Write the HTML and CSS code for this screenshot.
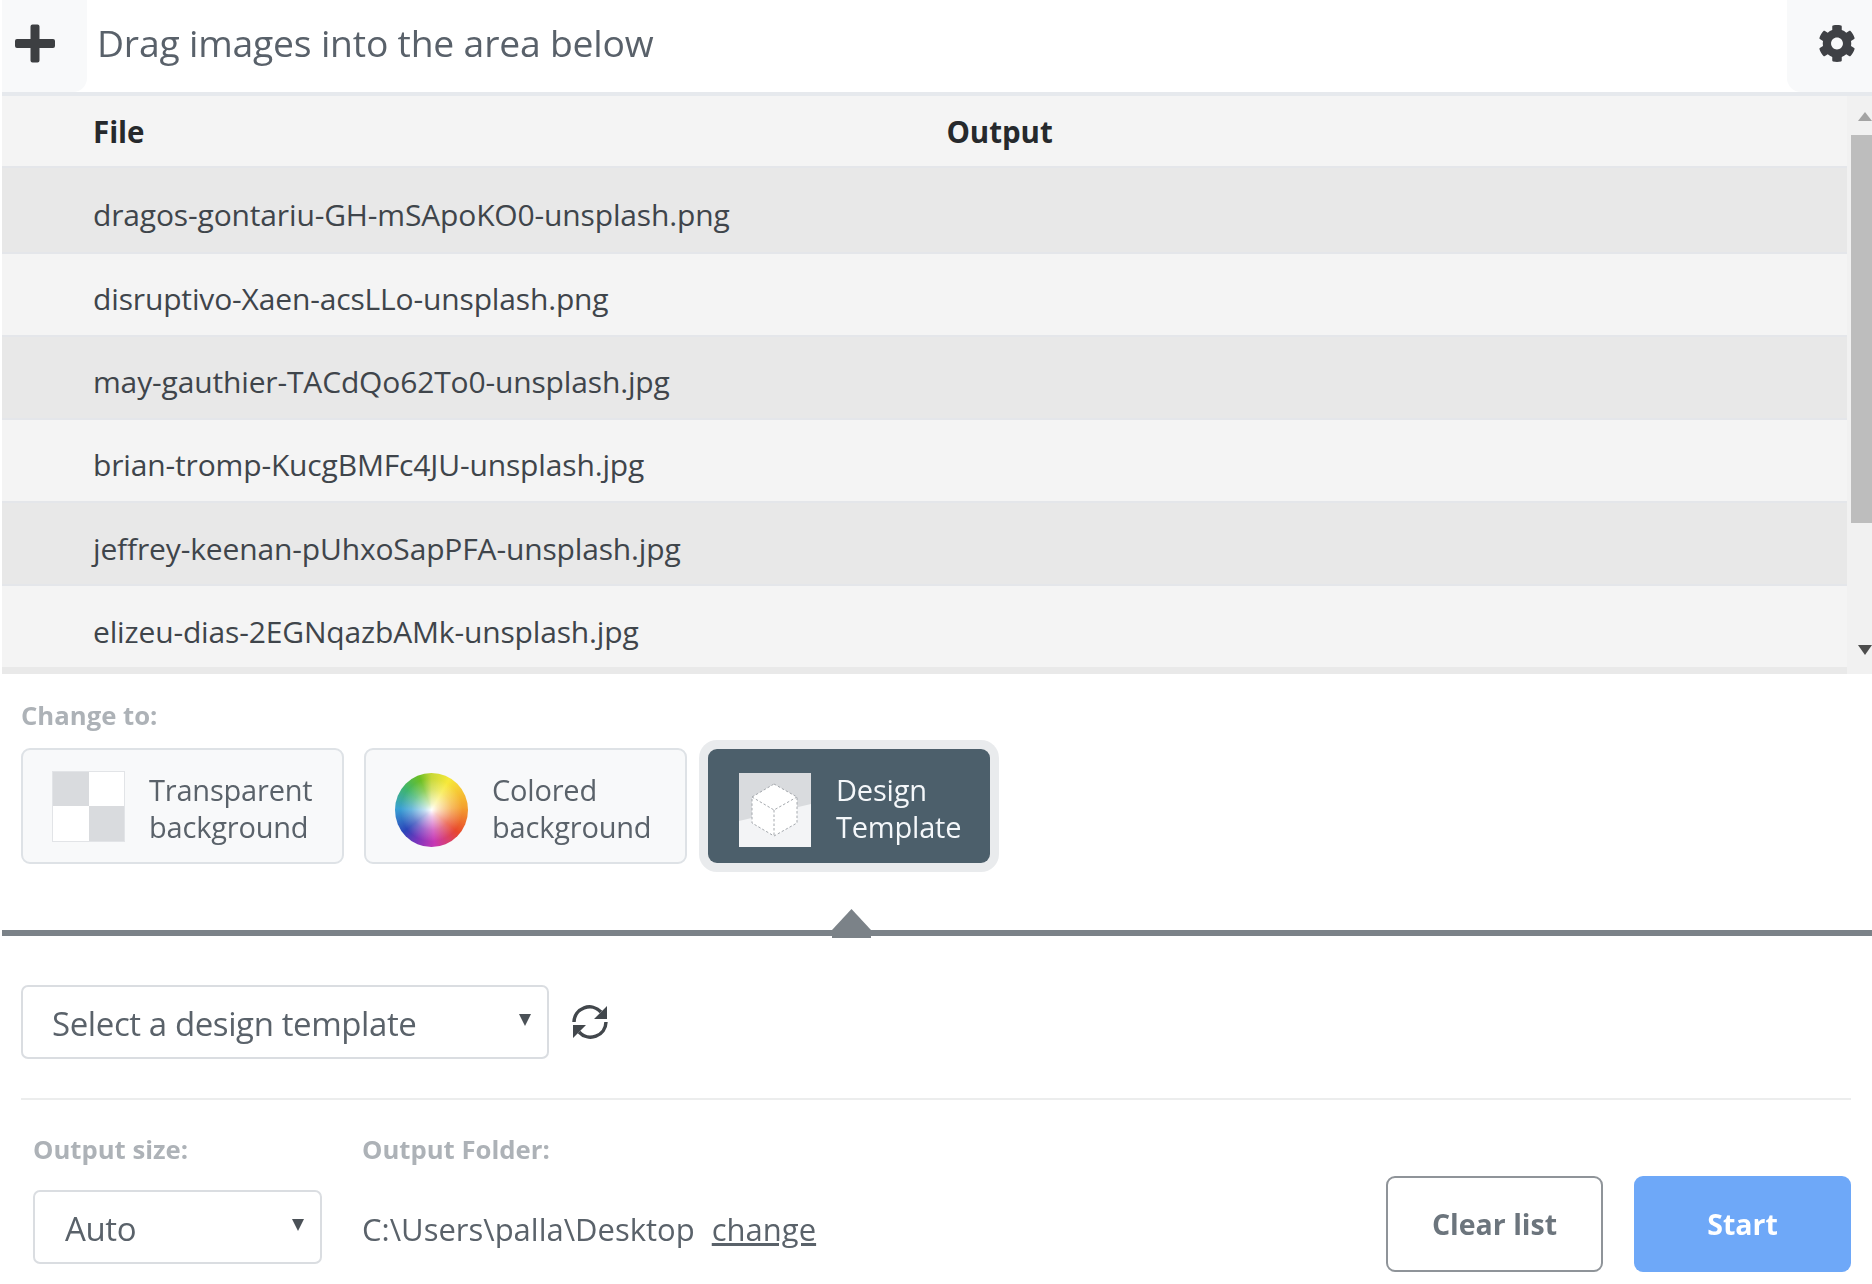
FILE: index.html
```html
<!DOCTYPE html>
<html lang="en">
<head>
<meta charset="utf-8">
<title>Change background</title>
<link rel="stylesheet" href="styles.css">
</head>
<body>
<div class="app">
  <header class="topbar">
    <button class="tool tool-add" aria-label="Add">
      <svg class="plus" viewBox="0 0 40 39"><path d="M15.5 2.5a2 2 0 0 1 2-2h5a2 2 0 0 1 2 2V15H38a2 2 0 0 1 2 2v5a2 2 0 0 1-2 2H24.500V36.500a2 2 0 0 1-2 2h-5a2 2 0 0 1-2-2V24H2a2 2 0 0 1-2-2v-5a2 2 0 0 1 2-2h13.500z"/></svg>
    </button>
    <div class="hint">Drag images into the area below</div>
    <button class="tool tool-gear" aria-label="Settings">
      <svg class="gear" viewBox="0 0 512 512"><path d="M487.400 315.700l-42.600-24.600c4.300-23.200 4.300-47 0-70.200l42.600-24.600c4.900-2.800 7.100-8.600 5.500-14-11.100-35.600-30-67.800-54.700-94.600-3.800-4.100-10-5.100-14.800-2.300L380.800 110c-17.900-15.400-38.500-27.300-60.800-35.100V25.800c0-5.600-3.900-10.500-9.400-11.700-36.700-8.200-74.300-7.800-109.200 0-5.500 1.200-9.400 6.100-9.400 11.700V75c-22.200 7.900-42.800 19.800-60.800 35.100L88.700 85.500c-4.900-2.800-11-1.900-14.800 2.300-24.700 26.700-43.600 58.900-54.700 94.600-1.700 5.400.6 11.200 5.500 14L67.300 221c-4.300 23.200-4.300 47 0 70.200l-42.600 24.600c-4.900 2.800-7.100 8.600-5.500 14 11.100 35.600 30 67.800 54.700 94.600 3.800 4.100 10 5.100 14.800 2.300l42.600-24.600c17.900 15.400 38.500 27.300 60.800 35.100v49.200c0 5.600 3.900 10.500 9.400 11.700 36.700 8.200 74.300 7.800 109.200 0 5.500-1.200 9.400-6.100 9.400-11.700v-49.200c22.200-7.900 42.800-19.800 60.800-35.100l42.600 24.600c4.900 2.800 11 1.900 14.800-2.300 24.700-26.700 43.600-58.900 54.700-94.600 1.500-5.500-.7-11.300-5.600-14.100zM256 336c-44.100 0-80-35.900-80-80s35.900-80 80-80 80 35.900 80 80-35.900 80-80 80z"/></svg>
    </button>
  </header>

  <section class="filelist">
    <div class="rows">
      <div class="row row-head"><span class="col-file">File</span><span class="col-output">Output</span></div>
      <div class="row row-dark row-first"><span class="col-file">dragos-gontariu-GH-mSApoKO0-unsplash.png</span></div>
      <div class="row"><span class="col-file">disruptivo-Xaen-acsLLo-unsplash.png</span></div>
      <div class="row row-dark"><span class="col-file">may-gauthier-TACdQo62To0-unsplash.jpg</span></div>
      <div class="row"><span class="col-file">brian-tromp-KucgBMFc4JU-unsplash.jpg</span></div>
      <div class="row row-dark"><span class="col-file">jeffrey-keenan-pUhxoSapPFA-unsplash.jpg</span></div>
      <div class="row"><span class="col-file">elizeu-dias-2EGNqazbAMk-unsplash.jpg</span></div>
    </div>
    <div class="scrollbar">
      <svg class="arrow arrow-up" viewBox="0 0 14 9"><path d="M7 0l7 9H0z"/></svg>
      <div class="thumb"></div>
      <svg class="arrow arrow-down" viewBox="0 0 14 10"><path d="M0 0h14l-7 10z"/></svg>
    </div>
  </section>

  <section class="change">
    <div class="label">Change to:</div>
    <div class="options">
      <div class="option">
        <div class="checker"><i class="cell cell-grey"></i><i class="cell"></i><i class="cell"></i><i class="cell cell-grey"></i></div>
        <div class="option-text">Transparent<br>background</div>
      </div>
      <div class="option">
        <div class="wheel"></div>
        <div class="option-text">Colored<br>background</div>
      </div>
      <div class="option option-active">
        <svg class="cube" viewBox="0 0 72 74">
          <rect width="72" height="74" fill="#f3f4f6"/>
          <path d="M0 0h72v31L0 48z" fill="#d9dbde"/>
          <path d="M35 11l23 13v26L35 63 13 50V24z" fill="#fff"/>
          <path d="M35 11l23 13v26L35 63 13 50V24zM13 24l22 13 23-13M35 37v26" fill="none" stroke="#a4a8ad" stroke-width="1" stroke-dasharray="2.500 2"/>
        </svg>
        <div class="option-text">Design<br>Template</div>
      </div>
    </div>
  </section>

  <div class="divider">
    <svg class="pointer" viewBox="0 0 39 29"><path d="M19.500 0L39 21v8H0v-8z"/></svg>
  </div>

  <section class="template">
    <div class="select select-template"><span>Select a design template</span><svg class="caret" viewBox="0 0 12 12"><path d="M0 0h12L6 12z"/></svg></div>
    <svg class="refresh" viewBox="0 0 38 38">
      <path class="refresh-arc" d="M3 19A15.500 15.500 0 0 1 30 9M35 19A15.500 15.500 0 0 1 8 29"/>
      <path class="refresh-head" d="M36 3v13H23zM2 35V22h13z"/>
    </svg>
  </section>

  <footer class="bottom">
    <div class="field field-size">
      <div class="label">Output size:</div>
      <div class="select select-size"><span>Auto</span><svg class="caret" viewBox="0 0 12 12"><path d="M0 0h12L6 12z"/></svg></div>
    </div>
    <div class="field field-folder">
      <div class="label">Output Folder:</div>
      <div class="path">C:\Users\palla\Desktop <a class="link" href="#">change</a></div>
    </div>
    <div class="actions">
      <button class="btn btn-clear">Clear list</button>
      <button class="btn btn-start">Start</button>
    </div>
  </footer>
</div>
</body>
</html>
```

FILE: styles.css
```css
* { box-sizing: border-box; }
html, body { margin: 0; padding: 0; background: #fff; overflow: hidden; }
body { font-family: "Open Sans", "Noto Sans", "Liberation Sans", sans-serif; color: #495057; }
.app { width: 1872px; height: 1284px; padding-left: 2px; filter: blur(0.5px); }

.topbar { display: flex; align-items: center; height: 96px; border-bottom: 4px solid #e6e9ed; }
.tool { height: 92px; border: 0; background: #f8f9fa; padding: 0; display: flex; align-items: center; }
.tool-add { width: 85px; border-bottom-right-radius: 14px; padding-left: 13px; }
.tool-gear { width: 85px; margin-left: auto; border-bottom-left-radius: 14px; padding-left: 31px; }
.plus { width: 40px; height: 39px; fill: #3d3f42; margin-bottom: 5px; }
.gear { width: 38px; height: 39px; fill: #3f4145; margin-bottom: 5px; }
.hint { margin: 0 0 7px 10px; font-size: 37.3px; letter-spacing: -0.2px; color: #59616a; }

.filelist { display: flex; height: 578px; background: #f1f1f1; }
.rows { width: 1845px; height: 578px; background: #e9e9e9; }
.row { display: flex; height: 83.2px; align-items: center; padding: 9px 0 0 91px; background: #f4f4f4; border-top: 2px solid #e4e6ea; font-size: 30px; letter-spacing: -0.15px; color: #3f454b; }
.row-first { height: 85.5px; }
.row-head { height: 70px; padding-top: 0; border-top: 0; font-weight: 700; color: #26292c; font-size: 29.5px; letter-spacing: -0.05px; }
.row-dark { background: #e8e8e8; }
.col-output { margin-left: 802px; }
.scrollbar { flex: 1; display: flex; flex-direction: column; align-items: flex-end; padding-top: 16px; height: 577px; }
.arrow { display: block; width: 14px; }
.arrow-up { height: 9px; fill: #a3a3a3; }
.arrow-down { height: 10px; fill: #4d4d4d; margin-top: auto; margin-bottom: 18px; }
.thumb { width: 21px; height: 388px; margin-top: 14px; background: #bdbdbd; }

.change { padding: 25px 0 0 19px; }
.label { font-size: 25.7px; font-weight: 700; color: #adb2b7; line-height: 34px; }
.options { display: flex; gap: 20px; align-items: center; margin-top: 15px; }
.option { display: flex; align-items: center; width: 323px; height: 116px; padding-left: 29px; gap: 24px; background: #f8f9fa; border: 2px solid #dee2e6; border-radius: 9px; }
.option-text { padding-top: 3px; font-size: 29px; line-height: 37px; letter-spacing: -0.2px; color: #5a626a; }
.checker { display: grid; grid-template-columns: 1fr 1fr; width: 73px; height: 71px; padding: 1px; background: #e2e4e7; }
.cell { background: #fff; }
.cell-grey { background: #d9dbde; }
.wheel { width: 73px; height: 74px; margin-top: 7px; border-radius: 50%; background:
  radial-gradient(closest-side, #fff 0, rgba(255,255,255,.7) 18%, rgba(255,255,255,.25) 55%, rgba(255,255,255,0) 85%),
  conic-gradient(#c8d838 0deg, #f7e93a 30deg, #f4a12e 85deg, #e8482c 130deg, #c738b4 175deg, #7a35bc 205deg, #2b45b8 232deg, #3aa0d4 272deg, #3fb56a 310deg, #6cbf24 340deg, #c8d838 360deg); }
.option-active { width: 282px; height: 114px; margin-left: 1px; background: #4c5f6b; border: 0; box-shadow: 0 0 0 9px #e9ebed; gap: 25px; padding-left: 31px; }
.option-active .option-text { color: #f4f7fa; }
.cube { width: 72px; height: 74px; flex: none; margin-top: 7px; }

.divider { position: relative; height: 6px; margin: 66px 0 0 0; background: #7b8288; }
.pointer { position: absolute; left: 830px; top: -21px; width: 39px; height: 29px; fill: #7b8288; }

.template { display: flex; align-items: center; gap: 22px; height: 164px; margin: 0 21px 0 19px; padding-top: 9px; border-bottom: 2px solid #eceded; }
.select { display: flex; align-items: center; justify-content: space-between; height: 74px; background: #fff; border: 2px solid #dadde1; border-radius: 7px; font-size: 33px; letter-spacing: -0.4px; color: #5a626a; }
.select-template { width: 528px; padding: 3px 16px 0 29px; }
.select-size { width: 289px; padding: 3px 16px 0 30px; }
.caret { width: 12px; height: 12px; fill: #4b5157; margin-top: -7px; }
.refresh { width: 38px; height: 38px; }
.refresh-arc { fill: none; stroke: #42474c; stroke-width: 3.5; }
.refresh-head { fill: #42474c; }

.bottom { display: flex; margin: 0 21px 0 31px; padding-top: 33px; }
.field-size { width: 329px; }
.field .label { margin-bottom: 23px; }
.field-folder { flex: 1; }
.path { font-size: 31px; color: #5a626a; line-height: 78px; }
.link { color: #5a626a; margin-left: 9px; }
.actions { display: flex; gap: 31px; padding-top: 43px; }
.btn { width: 217px; height: 96px; border-radius: 9px; font-family: inherit; font-size: 28.5px; font-weight: 700; }
.btn-clear { background: #fff; border: 2px solid #8f9499; color: #6c757d; }
.btn-start { background: #6ea8f8; border: 0; color: #fff; }
```
